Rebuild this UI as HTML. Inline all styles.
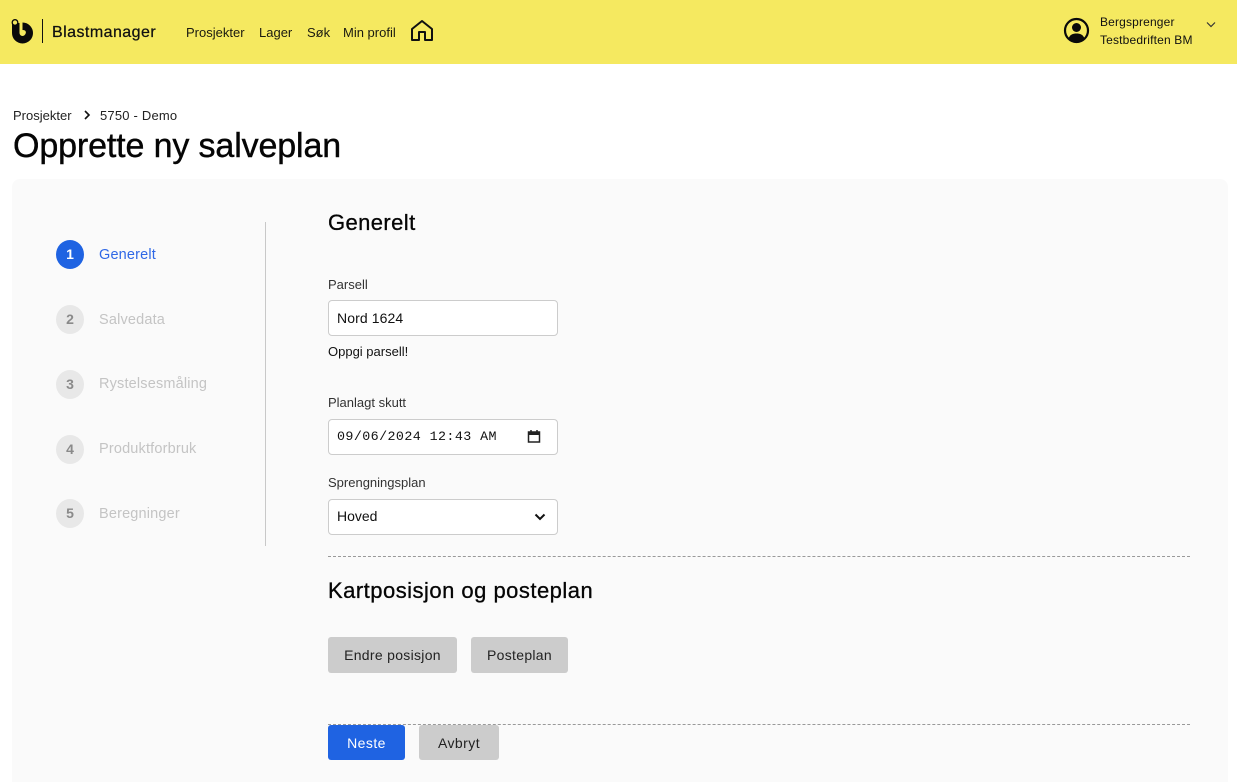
<!DOCTYPE html>
<html lang="no"><head><meta charset="utf-8"><title>Opprette ny salveplan</title>
<style>
html,body{margin:0;padding:0;background:#fff;width:1237px;height:782px;overflow:hidden}
body{position:relative;font-family:"Liberation Sans",sans-serif;color:#000}
.t{position:absolute;white-space:nowrap;line-height:20px;height:20px}
.b{position:absolute;box-sizing:border-box}
.nav{font-size:13px;color:#1a1a10;letter-spacing:0}
.lab{font-size:13px;color:#333;letter-spacing:0}
.step{font-size:14.500px;color:#c4c4c4;letter-spacing:.17px}
.c{position:absolute;left:56px;width:28px;height:29px;border-radius:50%;background:#e8e8e8;color:#8a8a8a;font-size:14px;font-weight:bold;text-align:center;line-height:29px}
.inp{position:absolute;left:328px;width:230px;height:36px;box-sizing:border-box;background:#fff;border:1px solid #ccc;border-radius:4px}
.btn{position:absolute;box-sizing:border-box;border-radius:3px;background:#ccc;color:#222;font-size:14px;text-align:center;letter-spacing:.3px}
.dash{position:absolute;left:328px;width:862px;height:0;border-top:1px dashed #999}
</style></head><body>
<div class="b" style="left:0;top:0;width:1237px;height:64px;background:#f5e960"></div>

<svg class="b" style="left:10px;top:18px" width="26" height="28" viewBox="0 0 26 28">
<path d="M5.750 5V15A6.750 6.750 0 1 0 12.500 8.250" fill="none" stroke="#0a0a0a" stroke-width="7.500"/>
<circle cx="5" cy="4.500" r="2.800" fill="#f5e960" stroke="#0a0a0a" stroke-width="1.300"/>
<circle cx="13.500" cy="14.500" r="2.400" fill="#f5e960"/>
</svg>
<div class="b" style="left:42px;top:19px;width:1px;height:24px;background:#111"></div>
<div class="t" style="left:52px;top:23px;font-size:16px;color:#111;letter-spacing:.45px;-webkit-text-stroke:.25px #111">Blastmanager</div>
<div class="t nav" style="left:186px;top:23px">Prosjekter</div>
<div class="t nav" style="left:259px;top:23px">Lager</div>
<div class="t nav" style="left:307px;top:23px">Søk</div>
<div class="t nav" style="left:343px;top:23px">Min profil</div>
<svg class="b" style="left:410px;top:19px" width="24" height="23" viewBox="0 0 24 23">
<path d="M2 21V10L12 2L22 10V21H15V13H9V21Z" fill="none" stroke="#111" stroke-width="2" stroke-linejoin="round"/>
</svg>

<svg class="b" style="left:1063px;top:17px" width="27" height="27" viewBox="0 0 27 27">
<circle cx="13.500" cy="13.500" r="11.500" fill="none" stroke="#0a0a0a" stroke-width="2.200"/>
<circle cx="13.500" cy="10.500" r="4.500" fill="#0a0a0a"/>
<path d="M5.500 21.500C7 17.500 10 16.500 13.500 16.500S20 17.500 21.500 21.500C19 24.500 16 25 13.500 25S8 24.500 5.500 21.500Z" fill="#0a0a0a"/>
</svg>
<div class="t" style="left:1100px;top:12px;font-size:12px;color:#111;letter-spacing:.16px">Bergsprenger</div>
<div class="t" style="left:1100px;top:30px;font-size:12px;color:#111;letter-spacing:.16px">Testbedriften BM</div>
<svg class="b" style="left:1205px;top:20px" width="12" height="10" viewBox="0 0 12 10">
<path d="M2 2.500L6 6.500L10 2.500" fill="none" stroke="#333" stroke-width="1.200"/>
</svg>

<div class="t" style="left:13px;top:106px;font-size:13px;color:#222">Prosjekter</div>
<svg class="b" style="left:83px;top:110px" width="8" height="10" viewBox="0 0 8 10">
<path d="M2 1L6 5L2 9" fill="none" stroke="#111" stroke-width="1.600"/>
</svg>
<div class="t" style="left:100px;top:106px;font-size:13px;color:#222;letter-spacing:.2px">5750 - Demo</div>
<div class="t" style="left:13px;top:127px;font-size:34px;line-height:38px;height:38px;color:#050505;letter-spacing:-.13px;-webkit-text-stroke:.4px #050505">Opprette ny salveplan</div>

<div class="b" style="left:12px;top:179px;width:1216px;height:603px;background:#fafafa;border-radius:8px 8px 0 0"></div>
<div class="b" style="left:265px;top:222px;width:1px;height:324px;background:#c8c8c8"></div>

<div class="c" style="top:240px;background:#1f63e2;color:#fff">1</div>
<div class="t step" style="left:99px;top:245px;color:#2f68e6">Generelt</div>
<div class="c" style="top:305px">2</div>
<div class="t step" style="left:99px;top:310px">Salvedata</div>
<div class="c" style="top:370px">3</div>
<div class="t step" style="left:99px;top:374px">Rystelsesmåling</div>
<div class="c" style="top:435px">4</div>
<div class="t step" style="left:99px;top:439px">Produktforbruk</div>
<div class="c" style="top:499px">5</div>
<div class="t step" style="left:99px;top:504px">Beregninger</div>

<div class="t" style="left:328px;top:213px;font-size:22px;color:#050505;letter-spacing:.4px;-webkit-text-stroke:.3px #050505">Generelt</div>
<div class="t lab" style="left:328px;top:275px">Parsell</div>
<div class="inp" style="top:300px"></div>
<div class="t" style="left:337px;top:308px;font-size:14px;color:#111;letter-spacing:.1px">Nord 1624</div>
<div class="t" style="left:328px;top:342px;font-size:13px;color:#111">Oppgi parsell!</div>

<div class="t lab" style="left:328px;top:393px">Planlagt skutt</div>
<div class="inp" style="top:419px"></div>
<div class="t" style="left:337px;top:428px;font-family:'Liberation Mono',monospace;font-size:13.330px;color:#111;letter-spacing:.42px">09/06/2024 12:43 AM</div>
<svg class="b" style="left:527px;top:429px" width="14" height="15" viewBox="0 0 14 15">
<path d="M1.500 3H12.500V13H1.500Z" fill="none" stroke="#222" stroke-width="1.500"/>
<path d="M1.500 3H12.500V6H1.500Z" fill="#222"/>
<path d="M4 1V3M10 1V3" stroke="#222" stroke-width="1.500"/>
</svg>

<div class="t lab" style="left:328px;top:473px">Sprengningsplan</div>
<div class="inp" style="top:499px"></div>
<div class="t" style="left:337px;top:506px;font-size:14px;color:#111">Hoved</div>
<svg class="b" style="left:533px;top:512px" width="14" height="10" viewBox="0 0 14 10">
<path d="M2.500 2.500L7 7L11.500 2.500" fill="none" stroke="#111" stroke-width="2"/>
</svg>

<div class="dash" style="top:556px"></div>
<div class="t" style="left:328px;top:581px;font-size:22px;color:#050505;letter-spacing:.48px;-webkit-text-stroke:.3px #050505">Kartposisjon og posteplan</div>
<div class="btn" style="left:328px;top:637px;width:129px;height:36px;line-height:36px">Endre posisjon</div>
<div class="btn" style="left:471px;top:637px;width:97px;height:36px;line-height:36px">Posteplan</div>
<div class="dash" style="top:724px"></div>
<div class="btn" style="left:328px;top:725px;width:77px;height:35px;line-height:36px;background:#1f63e2;color:#fff;letter-spacing:.45px">Neste</div>
<div class="btn" style="left:419px;top:725px;width:80px;height:35px;line-height:36px;letter-spacing:.45px">Avbryt</div>
</body></html>
